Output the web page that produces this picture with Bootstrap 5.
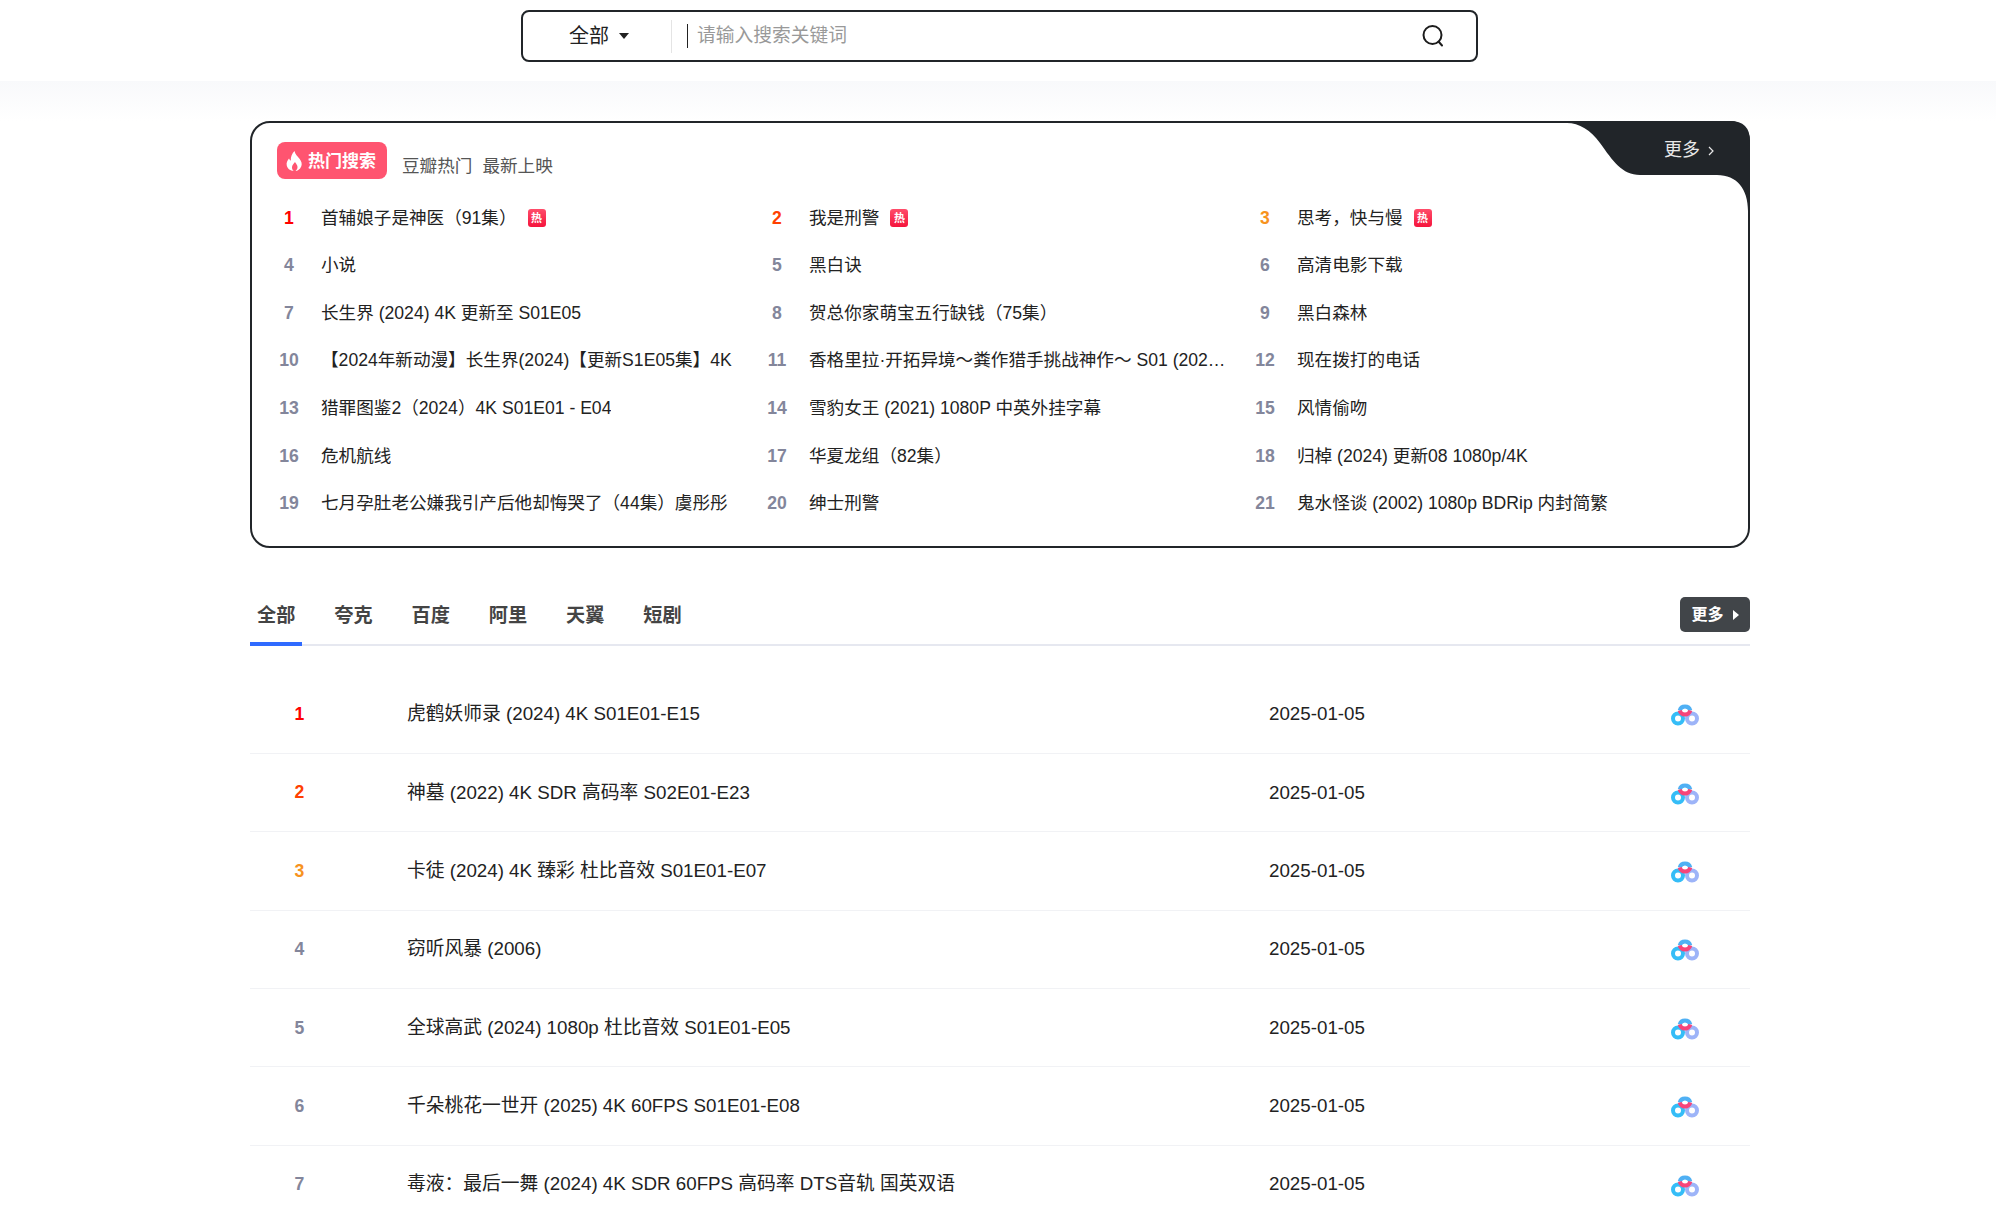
<!DOCTYPE html>
<html lang="zh-CN">
<head>
  <meta charset="UTF-8" />
  <title>搜索</title>
  <link href="https://cdn.jsdelivr.net/npm/bootstrap@5.3.0/dist/css/bootstrap.min.css" rel="stylesheet"/>
  <style>
    body {
      font-family: "Liberation Sans", "Noto Sans CJK SC", sans-serif;
      font-size: 17.6px;
      color: #222;
      background: #fff;
      height: 1221px;
      overflow: hidden;
    }
    a { color: inherit; text-decoration: none; }

    .top-bar {
      height: 81px;
      background: #fff;
      padding-top: 10px;
    }
    .search-box {
      width: 957px;
      height: 52px;
      margin-left: 521px;
      border: 2px solid #212529;
      border-radius: 8px;
    }
    .search-type {
      width: 149px;
      height: 33px;
      border-right: 1px solid #e4e4e4;
      padding-left: 46px;
      font-size: 20px;
      gap: 10px;
    }
    .search-caret {
      width: 0;
      height: 0;
      border-left: 5px solid transparent;
      border-right: 5px solid transparent;
      border-top: 6px solid #222;
    }
    .search-input {
      flex: 1;
      height: 24px;
      margin-left: 15px;
      padding: 0 0 0 9px;
      border: 0;
      border-left: 1px solid #222;
      font-size: 18.75px;
      outline: none;
    }
    .search-input::placeholder { color: #999; }
    .search-go { margin: 0 31px 0 20px; }

    .page-body {
      background: linear-gradient(#f8f9fb, #fff 40px);
      padding-top: 40px;
    }
    .page-wrap {
      width: 1500px;
      margin-left: 250px;
    }

    .hot-box {
      height: 427px;
      border: 2px solid #212529;
      border-radius: 20px;
      padding: 19px 25px 0;
    }
    .hot-corner {
      top: -2px;
      right: -2px;
    }
    .hot-more {
      top: 14px;
      right: 34px;
      color: #e8e8e8;
      font-size: 18px;
      gap: 8px;
    }
    .hot-title {
      width: 110px;
      height: 37px;
      padding-top: 2px;
      background: #ff5470;
      border-radius: 8px;
      color: #fff;
      font-weight: 700;
      font-size: 17px;
      gap: 5px;
    }
    .hot-title svg { margin: -2px 0 0 -2px; }
    .hot-links {
      color: #555;
      margin-left: 15px;
      padding-top: 11px;
      gap: 10px;
    }
    .hot-grid {
      display: grid;
      grid-template-columns: repeat(3, 488px);
      grid-auto-rows: 47.6px;
      margin-top: 14.6px;
    }
    .hot-item { min-width: 0; padding-right: 22px; }
    .hot-num {
      flex: 0 0 44px;
      padding-right: 20px;
      text-align: center;
      font-weight: 700;
    }
    .hot-name {
      white-space: nowrap;
      overflow: hidden;
      text-overflow: ellipsis;
    }
    .hot-tag {
      flex: 0 0 18px;
      height: 18px;
      margin-left: 11px;
      border-radius: 3px;
      background: linear-gradient(#ff4d6a, #f5143c);
      color: #fff;
      font-size: 11px;
      font-weight: 700;
      line-height: 18px;
      text-align: center;
    }
    .rank-1 { color: #f00; }
    .rank-2 { color: #ff4000; }
    .rank-3 { color: #f7931e; }
    .rank-n { color: #83869b; }

    .tab-row {
      height: 79px;
      margin-top: 19px;
      border-bottom: 2px solid #e6e8f0;
      padding-top: 30px;
    }
    .tab-link {
      height: 49px;
      margin-right: 24.9px;
      padding: 0 7px;
      color: #444;
      font-size: 19.2px;
      font-weight: 700;
      line-height: 37px;
    }
    .tab-link.is-on { border-bottom: 4px solid #2f6bff; margin-bottom: -2px; }
    .tab-more {
      width: 70px;
      height: 35px;
      border-radius: 5px;
      background: #414549;
      color: #fff;
      font-size: 16px;
      font-weight: 700;
      gap: 9px;
    }
    .tab-more i {
      border-left: 6px solid #fff;
      border-top: 5px solid transparent;
      border-bottom: 5px solid transparent;
    }

    .res-list { padding-top: 29.5px; }
    .res-row {
      height: 78.4px;
      border-bottom: 1px solid #f1f2f5;
    }
    .res-num {
      flex: 0 0 157px;
      padding-right: 58px;
      text-align: center;
      font-weight: 700;
    }
    .res-name { flex: 0 0 862px; font-size: 18.75px; }
    .res-date { flex: 0 0 401px; font-size: 18.75px; }
  </style>
</head>
<body>

  <!-- Search bar -->
  <header class="top-bar">
    <form class="search-box d-flex align-items-center" onsubmit="return false">
      <div class="search-type d-flex align-items-center">全部 <span class="search-caret"></span></div>
      <input class="search-input" type="text" placeholder="请输入搜索关键词" />
      <svg class="search-go" width="24" height="24" viewBox="0 0 24 24" fill="none" stroke="#1c1c1c" stroke-width="2" stroke-linecap="round">
        <circle cx="11.5" cy="11" r="9"/>
        <path d="M17.5 17.5 21 21.5"/>
      </svg>
    </form>
  </header>

  <main class="page-body">
    <div class="page-wrap">

      <!-- Hot searches -->
      <section class="hot-box position-relative">
        <svg class="hot-corner position-absolute" width="183" height="100" viewBox="0 0 183 100">
          <path fill="#212529" d="M0 0H163Q183 0 183 20V90H181C181 68 170 54 150 54H73C55 54 46 40 33 22C24 9 12 2 0 2Z"/>
        </svg>
        <a class="hot-more position-absolute d-flex align-items-center" href="#">更多
          <svg width="6" height="10" viewBox="0 0 6 10" fill="none" stroke="#e8e8e8" stroke-width="1.2"><path d="M1 1l4 4-4 4"/></svg>
        </a>

        <div class="d-flex align-items-start">
          <div class="hot-title d-flex align-items-center justify-content-center">
            <svg width="17" height="20" viewBox="0 0 17 20"><path fill="#fff" d="M8.500 0c.6 3.400 3 5 5.200 8 1.900 2.500 2.600 5 1.500 7.500C14 18.300 11.500 20 9.500 20c1.800-1.500 2.500-3.500 1.700-5.500-.5-1.200-1.400-2.100-2.200-3.500-.9 1.300-2.800 2.800-3 5-.1 1.600.5 3 1.700 4C4.500 19.800 1.500 17.800.8 14.800 0 11.500 1.500 9.500 3 7.500c.4 1 .9 1.700 1.800 2.200C4.500 6 6 2.500 8.500 0z"/></svg>
            热门搜索
          </div>
          <div class="hot-links d-flex"><a href="#">豆瓣热门</a><a href="#">最新上映</a></div>
        </div>

        <div class="hot-grid" id="hotGrid"></div>
      </section>

      <!-- Tabs -->
      <nav class="tab-row d-flex align-items-start">
        <a class="tab-link is-on" href="#">全部</a>
        <a class="tab-link" href="#">夸克</a>
        <a class="tab-link" href="#">百度</a>
        <a class="tab-link" href="#">阿里</a>
        <a class="tab-link" href="#">天翼</a>
        <a class="tab-link" href="#">短剧</a>
        <a class="tab-more ms-auto d-flex align-items-center justify-content-center" href="#">更多 <i></i></a>
      </nav>

      <!-- Results -->
      <div class="res-list" id="resList"></div>
    </div>
  </main>

  <script>
    const hot = [
      '首辅娘子是神医（91集）', '我是刑警', '思考，快与慢',
      '小说', '黑白诀', '高清电影下载',
      '长生界 (2024) 4K 更新至 S01E05', '贺总你家萌宝五行缺钱（75集）', '黑白森林',
      '【2024年新动漫】长生界(2024)【更新S1E05集】4K', '香格里拉·开拓异境～粪作猎手挑战神作～ S01 (2024) 1080p', '现在拨打的电话',
      '猎罪图鉴2（2024）4K S01E01 - E04', '雪豹女王 (2021) 1080P 中英外挂字幕', '风情偷吻',
      '危机航线', '华夏龙组（82集）', '归棹 (2024) 更新08 1080p/4K',
      '七月孕肚老公嫌我引产后他却悔哭了（44集）虞彤彤', '绅士刑警', '鬼水怪谈 (2002) 1080p BDRip 内封简繁'
    ];
    const results = [
      '虎鹤妖师录 (2024) 4K S01E01-E15',
      '神墓 (2022) 4K SDR 高码率 S02E01-E23',
      '卡徒 (2024) 4K 臻彩 杜比音效 S01E01-E07',
      '窃听风暴 (2006)',
      '全球高武 (2024) 1080p 杜比音效 S01E01-E05',
      '千朵桃花一世开 (2025) 4K 60FPS S01E01-E08',
      '毒液：最后一舞 (2024) 4K SDR 60FPS 高码率 DTS音轨 国英双语'
    ];

    function rankClass(n) {
      return n <= 3 ? 'rank-' + n : 'rank-n';
    }

    // baidu pan logo, top ring is blue above and pink below
    const cloudIcon = `
      <svg width="30" height="24" viewBox="0 0 30 24" fill="none" stroke-width="4">
        <circle cx="22" cy="16.500" r="5" stroke="#9db4f8"/>
        <circle cx="8" cy="16.500" r="5" stroke="#35bdf7"/>
        <path d="M9.700 8.500A5.500 5.500 0 0 1 20.300 8.500" stroke="#4fb0f4"/>
        <path d="M20.300 8.500A5.500 5.500 0 0 1 9.700 8.500" stroke="#f7447a"/>
      </svg>`;

    document.getElementById('hotGrid').innerHTML = hot.map((name, i) => `
      <a class="hot-item d-flex align-items-center" href="#">
        <span class="hot-num ${rankClass(i + 1)}">${i + 1}</span>
        <span class="hot-name">${name}</span>
        ${i < 3 ? '<span class="hot-tag">热</span>' : ''}
      </a>`).join('');

    document.getElementById('resList').innerHTML = results.map((name, i) => `
      <a class="res-row d-flex align-items-center" href="#">
        <span class="res-num ${rankClass(i + 1)}">${i + 1}</span>
        <span class="res-name">${name}</span>
        <span class="res-date">2025-01-05</span>
        ${cloudIcon}
      </a>`).join('');
  </script>
  <script src="https://cdn.jsdelivr.net/npm/bootstrap@5.3.0/dist/js/bootstrap.bundle.min.js"></script>
</body>
</html>
